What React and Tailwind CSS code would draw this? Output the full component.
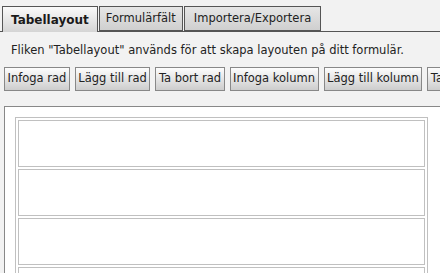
const tabs = ['Tabellayout', 'Formulärfält', 'Importera/Exportera'];
const buttons = ['Infoga rad', 'Lägg till rad', 'Ta bort rad', 'Infoga kolumn', 'Lägg till kolumn', 'Ta bort kolumn'];

export default function App() {
    return (
        <div className="h-[273px] w-[440px] overflow-hidden bg-[#f2f2f2] text-[#222] font-['DejaVu_Sans',Verdana,sans-serif] text-[11.5px]">
            {/* tab strip */}
            <div className="flex gap-[1px] pl-[2px] pt-[6px] border-b border-[#555] h-[32px]">
                {tabs.map((t, i) => (
                    <div
                        key={t}
                        className={
                            i === 0
                                ? 'h-[26px] -mb-[1px] px-[8px] flex items-center border border-b-0 border-[#555] bg-gradient-to-b from-[#fafafa] to-[#d4d4d4] font-bold text-[12px] text-[#1a1a1a]'
                                : i === 1
                                ? 'h-[25px] px-[6px] flex items-center border border-[#555] bg-gradient-to-b from-[#e6e6e6] to-[#cfcfcf]'
                                : 'h-[25px] px-[9px] flex items-center border border-[#555] bg-gradient-to-b from-[#e6e6e6] to-[#cfcfcf]'
                        }
                    >
                        {t}
                    </div>
                ))}
            </div>

            <p className="pl-[11px] pt-[11px] h-[35px] leading-[14px]">
                Fliken "Tabellayout" används för att skapa layouten på ditt formulär.
            </p>

            <div className="flex gap-[5px] pl-[4px] whitespace-nowrap">
                {buttons.map((b) => (
                    <button
                        key={b}
                        className="h-[24px] px-[2.5px] border border-[#888] bg-gradient-to-b from-[#fdfdfd] to-[#cdcdcd] shrink-0"
                    >
                        {b}
                    </button>
                ))}
            </div>

            {/* table panel */}
            <div className="mt-[15px] ml-[4px] w-[460px] h-[200px] bg-white border border-[#888] pt-[10px] pl-[10px]">
                <div className="w-[413px] border border-[#c0c0c0] p-[2px] flex flex-col gap-[2px]">
                    {[0, 1, 2, 3].map((r) => (
                        <div key={r} className="h-[47px] border border-[#c0c0c0]" />
                    ))}
                </div>
            </div>
        </div>
    );
}
